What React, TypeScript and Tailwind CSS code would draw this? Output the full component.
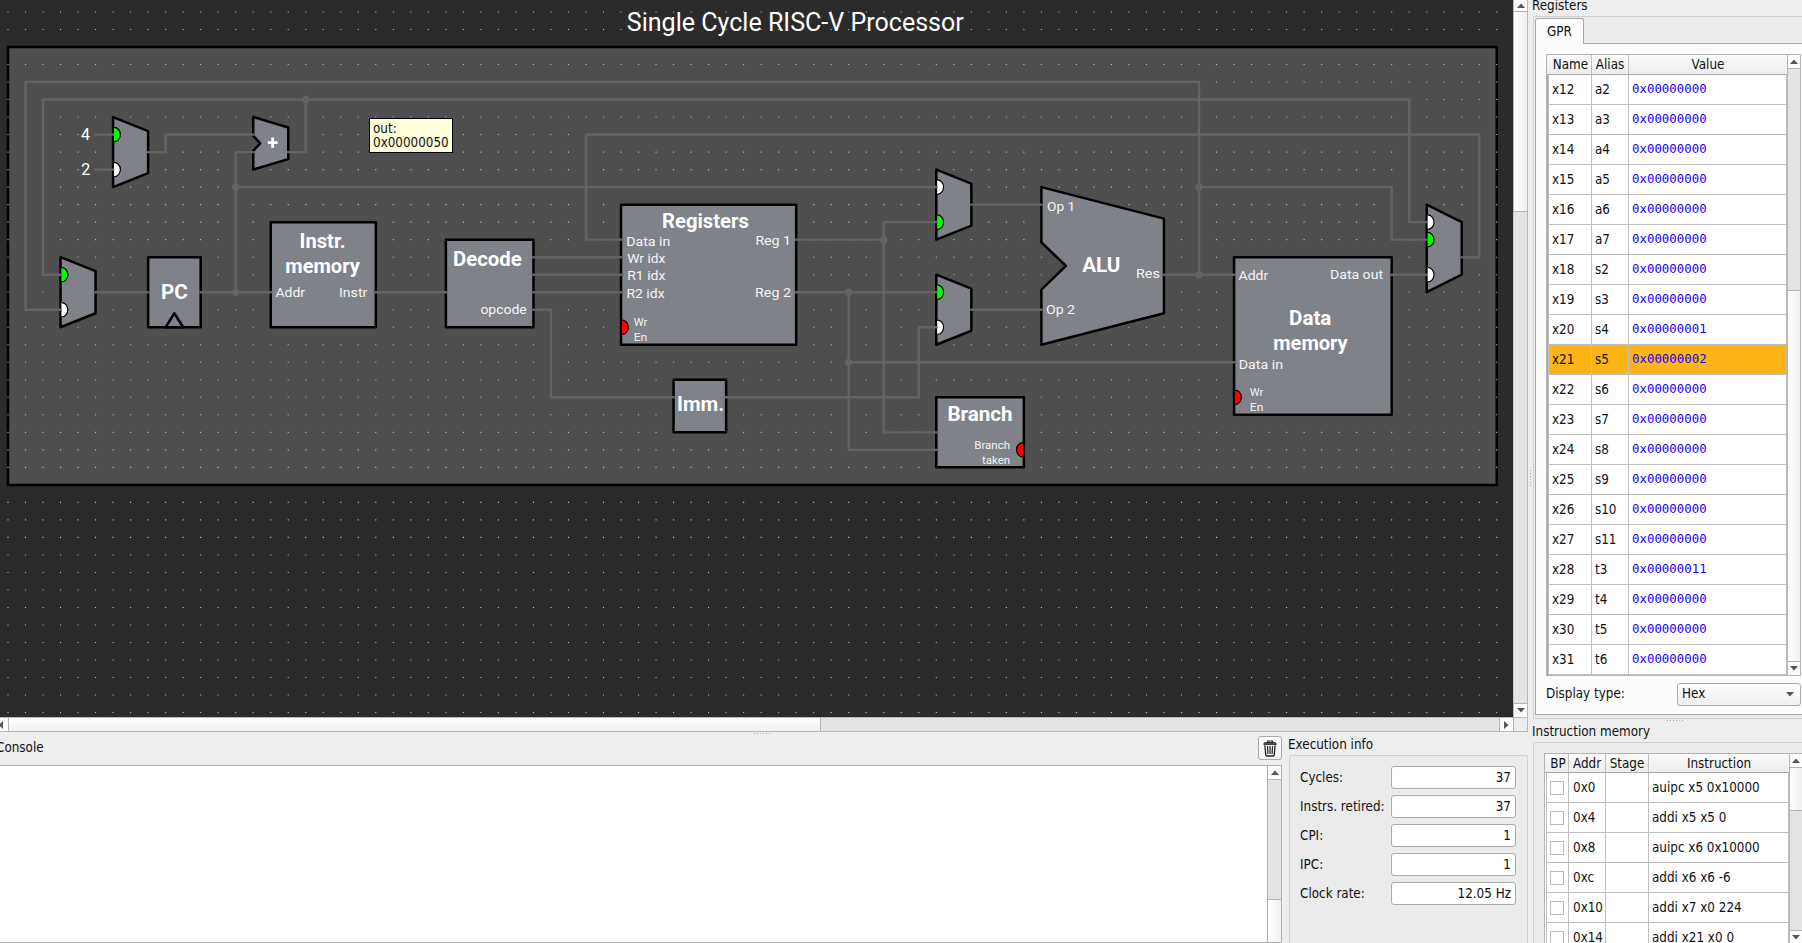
import type { ReactNode } from "react";

const PITCH = 17.515;
const OX = 8;
const OY = 47;
const gx = (i: number) => +(OX + i * PITCH).toFixed(2);
const gy = (j: number) => +(OY + j * PITCH).toFixed(2);
const pts = (list: number[][]) => list.map(([i, j]) => `${gx(i)},${gy(j)}`).join(" ");

const GRID_DOTS = (() => {
  let d = "";
  for (let i = 0; i <= 85; i++) {
    for (let j = -2; j <= 38; j++) {
      if (j === 0 || j === 25) continue;
      d += `M${(gx(i) - 0.55).toFixed(2)} ${(gy(j) - 0.55).toFixed(2)}h1.1v1.1h-1.1z`;
    }
  }
  return d;
})();

const WIRES: number[][][] = [
  [[3, 15], [1, 15], [1, 2], [68, 2], [68, 13]],
  [[3, 13], [2, 13], [2, 3], [80, 3], [80, 10], [81, 10]],
  [[8, 6], [9, 6], [9, 5], [14, 5]],
  [[16, 6], [17, 6], [17, 3]],
  [[5, 14], [8, 14]],
  [[11, 14], [15, 14]],
  [[13, 14], [13, 6], [14, 6]],
  [[13, 8], [53, 8]],
  [[21, 14], [25, 14]],
  [[30, 12], [35, 12]],
  [[30, 13], [35, 13]],
  [[30, 14], [35, 14]],
  [[30, 15], [31, 15], [31, 20], [38, 20]],
  [[41, 20], [52, 20], [52, 16], [53, 16]],
  [[83, 12], [84, 12], [84, 5], [33, 5], [33, 11], [35, 11]],
  [[45, 11], [50, 11]],
  [[53, 10], [50, 10], [50, 22], [53, 22]],
  [[45, 14], [53, 14]],
  [[48, 14], [48, 23], [53, 23]],
  [[48, 18], [70, 18]],
  [[55, 9], [59, 9]],
  [[55, 15], [59, 15]],
  [[66, 13], [70, 13]],
  [[68, 8], [79, 8], [79, 11], [81, 11]],
  [[79, 13], [81, 13]],
  [[4.97, 5], [6, 5]],
  [[4.97, 7], [6, 7]],
];

const JUNCTIONS = [[13, 14], [13, 8], [17, 3], [50, 11], [48, 14], [48, 18], [68, 8], [68, 13]];

const SHAPES: number[][][] = [
  [[3, 12], [5, 12.8], [5, 15.2], [3, 16]],
  [[6, 4], [8, 4.8], [8, 7.2], [6, 8]],
  [[53, 7], [55, 7.8], [55, 10.2], [53, 11]],
  [[53, 13], [55, 13.8], [55, 16.2], [53, 17]],
  [[81, 9], [83, 10], [83, 13], [81, 14]],
  [[14, 4], [16, 4.6], [16, 6.4], [14, 7], [14, 5.93], [14.4, 5.5], [14, 5.07]],
  [[59, 8], [66, 9.8], [66, 15.2], [59, 17], [59, 13.85], [60.4, 12.5], [59, 11.15]],
  [[8, 12], [11, 12], [11, 16], [8, 16]],
  [[15, 10], [21, 10], [21, 16], [15, 16]],
  [[25, 11], [30, 11], [30, 16], [25, 16]],
  [[35, 9], [45, 9], [45, 17], [35, 17]],
  [[38, 19], [41, 19], [41, 22], [38, 22]],
  [[53, 20], [58, 20], [58, 24], [53, 24]],
  [[70, 12], [79, 12], [79, 21], [70, 21]],
];

const PORTS: [number, number, string, 1 | -1][] = [
  [3, 13, "#00ff00", 1], [3, 15, "#ffffff", 1],
  [6, 5, "#00ff00", 1], [6, 7, "#ffffff", 1],
  [53, 8, "#ffffff", 1], [53, 10, "#00ff00", 1],
  [53, 14, "#00ff00", 1], [53, 16, "#ffffff", 1],
  [81, 10, "#ffffff", 1], [81, 11, "#00ff00", 1], [81, 13, "#ffffff", 1],
  [35, 16, "#ff0000", 1], [70, 20, "#ff0000", 1], [58, 23, "#ff0000", -1],
];

function Port({ i, j, fill, dir }: { i: number; j: number; fill: string; dir: 1 | -1 }) {
  const x = gx(i) + dir * 0.9;
  const y = gy(j);
  return (
    <path
      d={`M${x} ${y - 7.2}A6.4 7.2 0 0 ${dir === 1 ? 1 : 0} ${x} ${y + 7.2}`}
      fill={fill}
      stroke="#000"
      strokeWidth={1.2}
    />
  );
}

type LabelProps = { x: number; y: number; w: number; children: string };
const Bold = ({ x, y, w, children }: LabelProps) => (
  <text x={x} y={y} textLength={w} lengthAdjust="spacingAndGlyphs" className="fill-white text-[19.8px] font-bold">{children}</text>
);
const Pin = ({ x, y, w, children }: LabelProps) => (
  <text x={x} y={y} textLength={w} lengthAdjust="spacingAndGlyphs" className="fill-[#f4f4f4] text-[13.6px]">{children}</text>
);
const Small = ({ x, y, w, children }: LabelProps) => (
  <text x={x} y={y} textLength={w} lengthAdjust="spacingAndGlyphs" className="fill-[#f4f4f4] text-[11.4px]">{children}</text>
);

function Diagram() {
  return (
    <svg width="1513" height="717" viewBox="0 0 1513 717" className="block font-[Roboto,sans-serif]">
      <rect width="1513" height="717" fill="#2b2b2b" />
      <rect x={gx(0)} y={gy(0)} width={85 * PITCH} height={25 * PITCH} fill="#4f4f4f" stroke="#000" strokeWidth={2.5} strokeLinejoin="round" />
      <path d={GRID_DOTS} fill="#c3c3c3" />
      <text x="626.8" y="31" textLength="337" lengthAdjust="spacingAndGlyphs" className="fill-white text-[25px]">Single Cycle RISC-V Processor</text>
      <g fill="#808289" stroke="#000" strokeWidth={2.5} strokeLinejoin="round">
        {SHAPES.map((s, k) => (
          <polygon key={k} points={pts(s)} />
        ))}
        <polygon points={pts([[9, 16], [9.5, 15.2], [10, 16]])} />
      </g>
      {PORTS.map(([i, j, fill, dir], k) => (
        <Port key={k} i={i} j={j} fill={fill} dir={dir} />
      ))}
      <g fill="none" stroke="#646464" strokeWidth={2.4} strokeLinecap="square">
        {WIRES.map((w, k) => (
          <polyline key={k} points={pts(w)} />
        ))}
      </g>
      {JUNCTIONS.map(([i, j], k) => (
        <circle key={k} cx={gx(i)} cy={gy(j)} r={3.7} fill="#646464" />
      ))}
      <text x="85.6" y="140" textAnchor="middle" className="fill-white text-[16px]">4</text>
      <text x="85.8" y="175" textAnchor="middle" className="fill-white text-[16px]">2</text>

      <path d="M267.8 142.6h9.8M272.7 137.5v10.2" stroke="#fff" strokeWidth={2.8} />
      <Bold x={161} y={298.9} w={26.8}>PC</Bold>
      <Bold x={299.6} y={248.2} w={46}>Instr.</Bold>
      <Bold x={285.3} y={272.5} w={74.5}>memory</Bold>
      <Pin x={275.4} y={297.2} w={29.6}>Addr</Pin>
      <Pin x={339} y={297.2} w={28.3}>Instr</Pin>
      <Bold x={453} y={265.9} w={68.7}>Decode</Bold>
      <Pin x={480.4} y={314.2} w={46.4}>opcode</Pin>

      <Bold x={662} y={227.9} w={86.8}>Registers</Bold>
      <Pin x={626.2} y={246.2} w={44.2}>Data in</Pin>
      <Pin x={627.2} y={263} w={38.2}>Wr idx</Pin>
      <Pin x={627.2} y={280.2} w={38.2}>R1 idx</Pin>
      <Pin x={626.4} y={298} w={38.2}>R2 idx</Pin>
      <Pin x={755.4} y={245.3} w={35.6}>Reg 1</Pin>
      <Pin x={755} y={297.3} w={36}>Reg 2</Pin>
      <Small x={633.7} y={326.1} w={13.6}>Wr</Small>
      <Small x={633.7} y={341.2} w={13.6}>En</Small>
      <Bold x={677} y={411.2} w={47.2}>Imm.</Bold>

      <Pin x={1047} y={211.2} w={28.2}>Op 1</Pin>
      <Pin x={1046} y={314} w={29}>Op 2</Pin>
      <Pin x={1136} y={278.2} w={23.8}>Res</Pin>
      <Bold x={1082.2} y={272.4} w={38.2}>ALU</Bold>
      <Bold x={947.4} y={421.2} w={65}>Branch</Bold>
      <Small x={974.3} y={449.2} w={35.7}>Branch</Small>
      <Small x={982} y={464.2} w={28}>taken</Small>

      <Pin x={1238.6} y={280} w={29.6}>Addr</Pin>
      <Pin x={1330} y={279.3} w={53}>Data out</Pin>
      <Bold x={1289} y={325.2} w={42.4}>Data</Bold>
      <Bold x={1273.2} y={349.5} w={74.5}>memory</Bold>
      <Pin x={1238.8} y={369.2} w={44.2}>Data in</Pin>
      <Small x={1249.8} y={396} w={13.6}>Wr</Small>
      <Small x={1249.8} y={411.2} w={13.6}>En</Small>
    </svg>
  );
}

function Tri({ dir }: { dir: "up" | "down" | "left" | "right" }) {
  const d = { up: "M0 5L4 0.5L8 5z", down: "M0 0L4 4.5L8 0z", left: "M5 0L0.5 4L5 8z", right: "M0 0L4.5 4L0 8z" }[dir];
  const v = dir === "up" || dir === "down";
  return (
    <svg width={v ? 8 : 5} height={v ? 5 : 8} className="shrink-0">
      <path d={d} fill="#555" />
    </svg>
  );
}

function Grip({ vertical }: { vertical?: boolean }) {
  return (
    <div className={vertical ? "flex flex-col gap-[2px]" : "flex gap-[2px]"}>
      {[0, 1, 2, 3, 4, 5].map((k) => (
        <div key={k} className="size-px bg-[#a8a8a8]" />
      ))}
    </div>
  );
}

const REGS: [string, string, string][] = [
  ["x12", "a2", "0x00000000"], ["x13", "a3", "0x00000000"], ["x14", "a4", "0x00000000"],
  ["x15", "a5", "0x00000000"], ["x16", "a6", "0x00000000"], ["x17", "a7", "0x00000000"],
  ["x18", "s2", "0x00000000"], ["x19", "s3", "0x00000000"], ["x20", "s4", "0x00000001"],
  ["x21", "s5", "0x00000002"], ["x22", "s6", "0x00000000"], ["x23", "s7", "0x00000000"],
  ["x24", "s8", "0x00000000"], ["x25", "s9", "0x00000000"], ["x26", "s10", "0x00000000"],
  ["x27", "s11", "0x00000000"], ["x28", "t3", "0x00000011"], ["x29", "t4", "0x00000000"],
  ["x30", "t5", "0x00000000"], ["x31", "t6", "0x00000000"],
];

const INSTRS: [string, string][] = [
  ["0x0", "auipc x5 0x10000"], ["0x4", "addi x5 x5 0"], ["0x8", "auipc x6 0x10000"],
  ["0xc", "addi x6 x6 -6"], ["0x10", "addi x7 x0 224"], ["0x14", "addi x21 x0 0"],
];

const INFO: [string, string][] = [
  ["Cycles:", "37"], ["Instrs. retired:", "37"], ["CPI:", "1"], ["IPC:", "1"], ["Clock rate:", "12.05 Hz"],
];

function Head({ children, className }: { children: ReactNode; className: string }) {
  return <div className={`flex items-center justify-center border-r border-[#c0c0c0] ${className}`}>{children}</div>;
}

function RegistersPanel() {
  return (
    <section className="h-[720px] shrink-0">
      <h2 className="-mt-[4px] -ml-px h-[20px] leading-[20px]">Registers</h2>
      <div className="h-[703px] rounded-l-[2px] border border-r-0 border-[#d0d0d0] bg-[#ebebeb] pt-[1px] pl-[1px]">
        <div className="relative z-10 h-[26px] w-[49px] rounded-t-[3px] border border-b-0 border-[#a8a8a8] bg-[#fcfcfc] pl-[11px] leading-[26px]">GPR</div>
        <div className="-mt-px h-[672px] border border-r-0 border-[#a8a8a8] bg-[#fcfcfc] pt-[10px] pl-[10px]">
          <div className="flex h-[622px] w-[255px] border border-[#b4b4b4] bg-white">
            <div className="w-[240px] shrink-0">
              <div className="flex h-[20px] border-b border-[#a8a8a8] bg-linear-to-b from-[#fafafa] to-[#ededed] leading-[20px]">
                <Head className="w-[45px] pl-[3px]">Name</Head>
                <Head className="w-[37px]">Alias</Head>
                <div className="flex flex-1 items-center justify-center">Value</div>
              </div>
              <div className="border-l border-[#a8a8a8]">
                {REGS.map(([n, a, v]) => (
                  <div key={n} className={`flex h-[30px] items-center border-b border-l border-[#bfbfbf] ${n === "x21" ? "bg-[#fdb515]" : ""}`}>
                    <div className="flex h-full w-[43px] items-center border-r border-[#bfbfbf] pl-[3px]">{n}</div>
                    <div className="flex h-full w-[37px] items-center border-r border-[#bfbfbf] pl-[3px]">{a}</div>
                    <div className="flex h-full flex-1 items-center border-r border-[#bfbfbf] pl-[3px] font-['DejaVu_Sans_Mono',monospace] text-[12.4px] text-[#1a00ff]">{v}</div>
                  </div>
                ))}
              </div>
            </div>
            <div className="flex flex-1 flex-col bg-[#e4e4e4]">
              <div className="flex h-[14px] items-center justify-center border-b border-l border-[#b4b4b4] bg-[#fcfcfc]"><Tri dir="up" /></div>
              <div className="h-[221px] border-l border-[#b4b4b4]" />
              <div className="flex-1 border-y border-l border-[#b4b4b4] bg-linear-to-r from-white to-[#f0f0f0]" />
              <div className="flex h-[13px] items-center justify-center border-l border-[#b4b4b4] bg-[#fcfcfc]"><Tri dir="down" /></div>
            </div>
          </div>
          <div className="mt-[6px] flex h-[24px] w-[255px] items-center justify-between">
            <span>Display type:</span>
            <div className="flex h-[23px] w-[124px] items-center justify-between rounded-[3px] border border-[#ababab] bg-linear-to-b from-white to-[#efefef] pr-[6px] pl-[4px]">
              Hex
              <Tri dir="down" />
            </div>
          </div>
        </div>
      </div>
      <div className="mt-[1px] flex justify-center pl-[15px]"><Grip /></div>
    </section>
  );
}

function InstructionPanel() {
  return (
    <section className="flex min-h-0 flex-1 flex-col">
      <h2 className="mt-[2px] -ml-px h-[20px] leading-[20px]">Instruction memory</h2>
      <div className="min-h-0 flex-1 rounded-tl-[2px] border-t border-l border-[#d0d0d0] bg-[#ebebeb] pt-[10px] pl-[10px]">
        <div className="flex h-[190px] border-t border-l border-[#b4b4b4] bg-white">
          <div className="w-[244px] shrink-0">
            <div className="flex h-[19px] border-b border-[#a8a8a8] bg-linear-to-b from-[#fafafa] to-[#ededed] leading-[20px]">
              <Head className="w-[24px] pt-px pl-[3px]">BP</Head>
              <Head className="w-[37px] pt-px">Addr</Head>
              <Head className="w-[43px] pt-px">Stage</Head>
              <div className="flex flex-1 items-center justify-center pt-px">Instruction</div>
            </div>
            {INSTRS.map(([addr, text]) => (
              <div key={addr} className="ml-px flex h-[30px] border-b border-l border-[#bfbfbf]">
                <div className="flex w-[22px] items-center border-r border-[#bfbfbf] pl-[3px]">
                  <div className="size-[14px] border border-[#bdbdbd] bg-white" />
                </div>
                <div className="flex w-[37px] items-center border-r border-[#bfbfbf] pl-[4px]">{addr}</div>
                <div className="w-[43px] border-r border-[#bfbfbf]" />
                <div className="flex flex-1 items-center border-r border-[#bfbfbf] pl-[3px]">{text}</div>
              </div>
            ))}
          </div>
          <div className="flex flex-1 flex-col border-l border-[#b4b4b4] bg-[#e4e4e4]">
            <div className="flex h-[14px] items-center justify-center border-b border-[#b4b4b4] bg-[#fcfcfc]"><Tri dir="up" /></div>
            <div className="h-[43px] border-b border-[#b4b4b4] bg-linear-to-r from-white to-[#f0f0f0]" />
            <div className="flex-1" />
            <div className="flex h-[13px] items-center justify-center border-t border-[#b4b4b4] bg-[#fcfcfc]"><Tri dir="down" /></div>
          </div>
        </div>
      </div>
    </section>
  );
}

function Trash() {
  return (
    <svg width="14" height="17" viewBox="0 0 14 17" className="shrink-0">
      <path d="M4.6 2.4V1h4.8v1.4" fill="none" stroke="#222" strokeWidth="1.2" />
      <path d="M0.8 4.4c0-1.3 0.6-1.9 1.6-1.9h9.2c1 0 1.6 0.6 1.6 1.9z" fill="#555" stroke="#222" strokeWidth="0.9" />
      <path d="M1.9 5.2L2.7 14.6q0.1 1.4 1.6 1.4h5.4q1.5 0 1.6-1.4L12.1 5.2" fill="none" stroke="#222" strokeWidth="1.3" />
      <path d="M4.5 6l0.4 8M7 6v8M9.5 6l-0.4 8" stroke="#222" strokeWidth="1.2" />
    </svg>
  );
}

export default function App() {
  return (
    <div className="flex h-[943px] w-[1802px] overflow-hidden bg-[#eeeeee] font-['DejaVu_Sans_Condensed','DejaVu_Sans',sans-serif] text-[13.333px] whitespace-nowrap text-[#111]">
      <div className="flex w-[1528px] shrink-0 flex-col">
        <div className="flex h-[717px]">
          <div className="relative w-[1513px] shrink-0">
            <Diagram />
            <div className="absolute top-[118px] left-[369px] h-[35px] w-[84px] border border-black bg-[#ffffdc] pt-[3px] pl-[3px] leading-[14px]">
              out:
              <br />
              0x00000050
            </div>
          </div>
          <div className="flex flex-1 flex-col border-r border-[#b8b8b8] bg-[#e4e4e4]">
            <div className="flex h-[12px] items-center justify-center border-b border-l border-[#b4b4b4] bg-[#fcfcfc]"><Tri dir="up" /></div>
            <div className="h-[200px] border-b border-l border-[#b4b4b4] bg-linear-to-r from-white to-[#f0f0f0]" />
            <div className="flex-1 border-l border-[#c8c8c8]" />
            <div className="flex h-[14px] items-center justify-center border-t border-l border-[#b4b4b4] bg-[#fcfcfc]"><Tri dir="down" /></div>
          </div>
        </div>
        <div className="flex h-[15px] border-y border-r border-[#b8b8b8] bg-[#e4e4e4]">
          <div className="flex w-[9px] items-center border-r border-[#b4b4b4] bg-[#fcfcfc]"><div className="-ml-[2px]"><Tri dir="left" /></div></div>
          <div className="w-[812px] border-r border-[#b4b4b4] bg-linear-to-b from-white to-[#f0f0f0]" />
          <div className="flex-1" />
          <div className="flex w-[14px] items-center justify-center border-l border-[#b4b4b4] bg-[#fcfcfc]"><Tri dir="right" /></div>
          <div className="w-[14px] border-l border-[#b4b4b4] bg-[#ededed]" />
        </div>
        <div className="flex min-h-0 flex-1">
          <div className="flex w-[1282px] flex-col">
            <div className="flex h-[33px]">
              <div className="-ml-[4px] w-[758px] pt-[6px] leading-[20px]">Console</div>
              <div className="flex-1 pt-[1px]"><Grip /></div>
              <div className="mt-[4px] flex h-[24px] w-[24px] items-center justify-center rounded-[3px] border border-[#ababab] bg-linear-to-b from-white to-[#f2f2f2]"><Trash /></div>
            </div>
            <div className="flex flex-1 border border-l-0 border-[#b0b0b0] bg-white">
              <div className="flex-1" />
              <div className="flex w-[14px] flex-col border-l border-[#b0b0b0] bg-[#e4e4e4]">
                <div className="flex h-[14px] items-center justify-center border-b border-[#b4b4b4] bg-[#fcfcfc]"><Tri dir="up" /></div>
                <div className="flex-1" />
                <div className="h-[43px] border-t border-[#b4b4b4] bg-linear-to-r from-white to-[#f0f0f0]" />
              </div>
            </div>
          </div>
          <div className="ml-[6px] flex flex-1 flex-col">
            <h2 className="mt-[3px] h-[20px] leading-[20px]">Execution info</h2>
            <div className="ml-px flex flex-1 flex-col gap-[6px] rounded-t-[2px] border border-b-0 border-[#d0d0d0] bg-[#ebebeb] pt-[10px] pr-[11px] pl-[10px]">
              {INFO.map(([label, value]) => (
                <div key={label} className="flex h-[23px] items-center justify-between">
                  <span>{label}</span>
                  <div className="flex h-[23px] w-[125px] items-center justify-end rounded-[3px] border border-[#ababab] bg-white pr-[4px]">{value}</div>
                </div>
              ))}
            </div>
          </div>
        </div>
      </div>
      <div className="flex w-[5px] shrink-0 justify-center pt-[470px]">
        <Grip vertical />
      </div>
      <div className="flex min-w-0 flex-1 flex-col">
        <RegistersPanel />
        <InstructionPanel />
      </div>
    </div>
  );
}
